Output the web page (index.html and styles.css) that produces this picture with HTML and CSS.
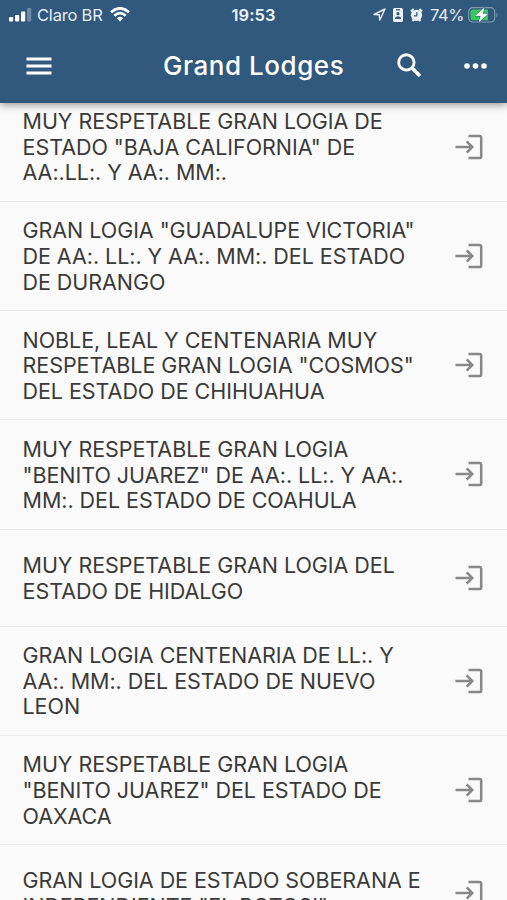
FILE: index.html
```html
<!DOCTYPE html>
<html lang="es">
<head>
<meta charset="utf-8">
<title>Grand Lodges</title>
<link rel="stylesheet" href="styles.css">
</head>
<body>
<svg class="defs" width="0" height="0" aria-hidden="true">
  <symbol id="enter" viewBox="0 0 28 26">
    <path d="M.5 13H17M11.7 7.4 17.3 13 11.7 18.6M13.5 1.9H24.5Q26.2 1.9 26.2 3.6V22.4Q26.2 24.1 24.5 24.1H13.5" fill="none" stroke="currentColor" stroke-width="2.5"/>
  </symbol>
</svg>
<header class="header">
  <div class="status">
    <div class="status-left">
      <svg class="signal" width="23" height="14" viewBox="0 0 23 14" fill="#fff"><rect x="0" y="9" width="4.2" height="4.5" rx="1"/><rect x="6" y="7" width="4.2" height="6.5" rx="1"/><rect x="12" y="3.5" width="4.2" height="10" rx="1"/><rect x="18" y="0" width="4.2" height="13.5" rx="1" opacity=".3"/></svg>
      <span class="carrier">Claro BR</span>
      <svg width="20" height="15" viewBox="0 0 20 15" fill="none" stroke="#fff" stroke-width="2.7"><path d="M1 5.3Q10-2.7 19 5.3M4.3 8.7Q10 3.7 15.7 8.7"/><path d="M6.8 11.2Q10 8.5 13.2 11.2L10 14.5Z" fill="#fff" stroke="none"/></svg>
    </div>
    <span class="time">19:53</span>
    <div class="status-right">
      <svg width="13" height="13" viewBox="0 0 13 13" fill="none" stroke="#e5edf5" stroke-width="1.4" stroke-linejoin="round"><path d="M1 6.5 12 1 6.8 12 6.2 6.8Z"/></svg>
      <svg width="10" height="14" viewBox="0 0 10 14"><rect width="10" height="14" rx="1.6" fill="#edf3f8"/><path d="M3 1.8H7" stroke="#31587d" stroke-width="1.3"/><circle cx="5" cy="5.7" r="1.6" fill="#31587d"/><path d="M2 11V9.8Q5 6.8 8 9.8V11Z" fill="#31587d"/></svg>
      <svg width="13" height="14" viewBox="0 0 13 14"><path d="M1 3.5 3.7 1M12 3.5 9.3 1M2.5 13 4 11.5M10.5 13 9 11.5" stroke="#edf3f8" stroke-width="2.2"/><circle cx="6.5" cy="7.3" r="5.6" fill="#edf3f8"/><path d="M6.8 4V7.8H4" fill="none" stroke="#31587d" stroke-width="1.2"/></svg>
      <span class="percent">74%</span>
      <svg class="battery" width="31" height="18" viewBox="0 0 31 18"><rect x=".7" y="1.7" width="26" height="14.3" rx="4" fill="none" stroke="#8299b0" stroke-width="1.2"/><path d="M5 3.5H20V14.3H5Q2.5 14.3 2.5 11.8V6Q2.5 3.5 5 3.5Z" fill="#36c95b"/><path d="M28.5 6.5Q30.5 9 28.5 11.5Z" fill="#8299b0"/><path d="M16.5 1.5 7 10H12.5L10.5 16.5 20.3 7.8H14.7Z" fill="#fff" stroke="#31587d" stroke-width="1" paint-order="stroke"/></svg>
    </div>
  </div>
  <div class="toolbar">
    <svg width="26" height="18" viewBox="0 0 26 18" stroke="#fff" stroke-width="2.9"><path d="M.5 2H25.5M.5 9H25.5M.5 16H25.5"/></svg>
    <h1 class="title">Grand Lodges</h1>
    <svg class="search" width="25" height="25" viewBox="0 0 25 25" fill="none" stroke="#fff"><circle cx="9.4" cy="9.4" r="7.7" stroke-width="2.9"/><path d="M15 15 23 23" stroke-width="3.8"/></svg>
    <svg class="more" width="23" height="6" viewBox="0 0 23 6" fill="#fff"><circle cx="3" cy="3" r="2.8"/><circle cx="11.5" cy="3" r="2.8"/><circle cx="20" cy="3" r="2.8"/></svg>
  </div>
</header>
<ul class="list">
  <li class="row"><p class="name">MUY RESPETABLE GRAN LOGIA DE<br>ESTADO "BAJA CALIFORNIA" DE<br>AA:.LL:. Y AA:. MM:.</p><svg class="enter"><use href="#enter"/></svg></li>
  <li class="row"><p class="name">GRAN LOGIA "GUADALUPE VICTORIA"<br>DE AA:. LL:. Y AA:. MM:. DEL ESTADO<br>DE DURANGO</p><svg class="enter"><use href="#enter"/></svg></li>
  <li class="row"><p class="name">NOBLE, LEAL Y CENTENARIA MUY<br>RESPETABLE GRAN LOGIA "COSMOS"<br>DEL ESTADO DE CHIHUAHUA</p><svg class="enter"><use href="#enter"/></svg></li>
  <li class="row"><p class="name">MUY RESPETABLE GRAN LOGIA<br>"BENITO JUAREZ" DE AA:. LL:. Y AA:.<br>MM:. DEL ESTADO DE COAHULA</p><svg class="enter"><use href="#enter"/></svg></li>
  <li class="row short"><p class="name">MUY RESPETABLE GRAN LOGIA DEL<br>ESTADO DE HIDALGO</p><svg class="enter"><use href="#enter"/></svg></li>
  <li class="row"><p class="name">GRAN LOGIA CENTENARIA DE LL:. Y<br>AA:. MM:. DEL ESTADO DE NUEVO<br>LEON</p><svg class="enter"><use href="#enter"/></svg></li>
  <li class="row"><p class="name">MUY RESPETABLE GRAN LOGIA<br>"BENITO JUAREZ" DEL ESTADO DE<br>OAXACA</p><svg class="enter"><use href="#enter"/></svg></li>
  <li class="row short"><p class="name">GRAN LOGIA DE ESTADO SOBERANA E<br>INDEPENDIENTE "EL POTOSI"</p><svg class="enter"><use href="#enter"/></svg></li>
</ul>
</body>
</html>
```
FILE: styles.css
```css
* { box-sizing: border-box; }
html, body { height: 100%; }
body {
  margin: 0;
  overflow: hidden;
  background: #fafafa;
  color: #3a3a3a;
  font-family: Inter, "Liberation Sans", sans-serif;
}
svg { display: block; flex: none; }
.defs { position: absolute; }
.header {
  position: relative;
  z-index: 1;
  height: 103px;
  background: #31587d;
  color: #fff;
  box-shadow: 0 2px 8px rgba(0, 0, 0, .4);
}
.status {
  display: grid;
  grid-template-columns: 1fr auto 1fr;
  align-items: center;
  height: 29px;
  padding: 0 9px;
}
.status-left, .status-right { display: flex; align-items: center; }
.carrier { margin: 0 7px 0 5px; font-size: 16.5px; letter-spacing: -.2px; color: #e5edf5; }
.time { font-size: 16.5px; font-weight: 600; letter-spacing: .1px; color: #edf3f8; }
.status-right { justify-content: flex-end; gap: 7px; margin-right: -1px; }
.percent { font-size: 16.5px; letter-spacing: -.4px; color: #e5edf5; }
.battery { margin-left: -3px; }
.toolbar {
  display: flex;
  align-items: center;
  height: 73px;
  padding: 0 20px 0 26px;
}
.title { margin: 0 0 0 111px; width: 183px; font-size: 26px; font-weight: 500; letter-spacing: .55px; white-space: nowrap; }
.search { margin-left: 51px; }
.more { margin-left: auto; }
.list { margin: -10.5px 0 0; padding: 0; list-style: none; }
.row {
  display: flex;
  align-items: center;
  justify-content: space-between;
  height: 109.25px;
  padding: 0 24px 0 22.5px;
  border-bottom: 1px solid #ebebeb;
}
.row.short { height: 97px; }
.name { margin: 0; padding-top: 2px; font-size: 21.5px; line-height: 25.7px; letter-spacing: -.045px; white-space: nowrap; }
.enter { width: 28px; height: 26px; color: #888; }
```
